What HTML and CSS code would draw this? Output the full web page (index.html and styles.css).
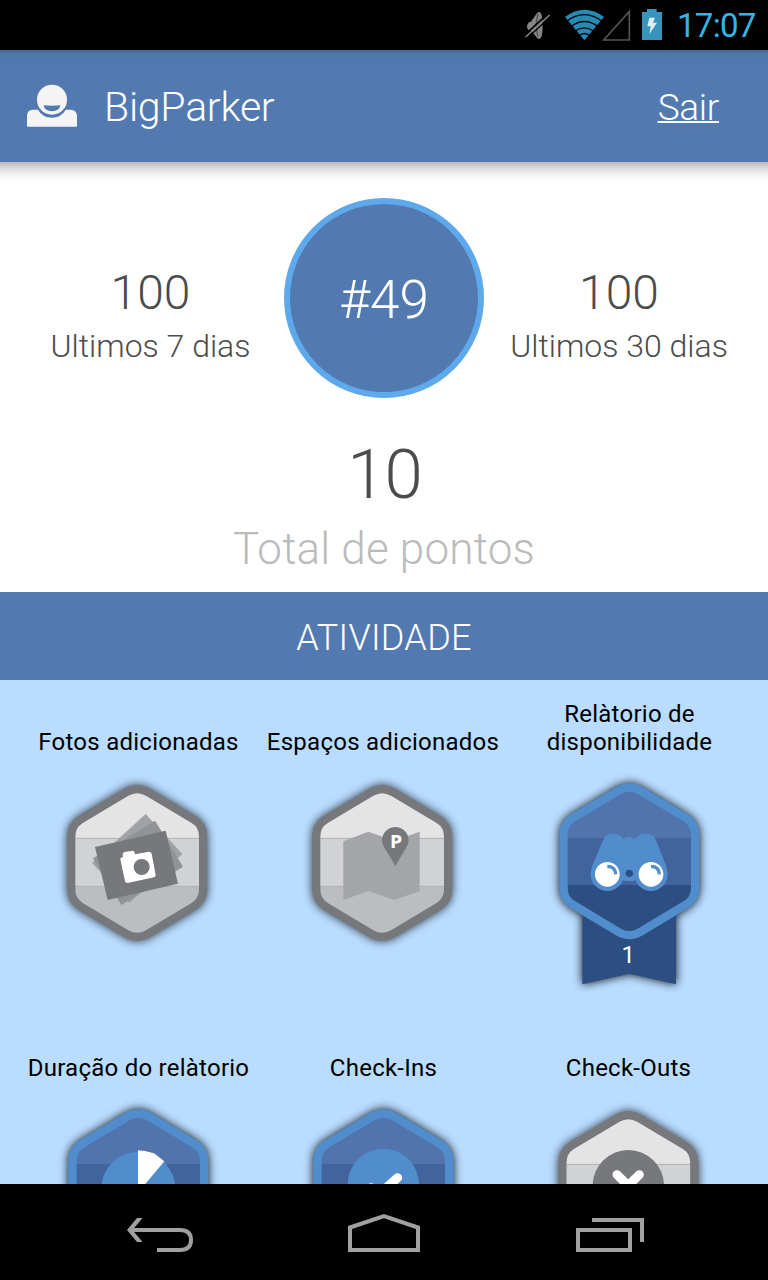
FILE: index.html
```html
<!DOCTYPE html>
<html lang="pt">
<head>
<meta charset="utf-8">
<title>BigParker</title>
<link rel="stylesheet" href="styles.css">
</head>
<body>
<svg class="defs" width="0" height="0" aria-hidden="true">
  <defs>
    <path id="hex" d="M64 200Q64 166 92 149L229 67Q261.500 48 294 67L431 149Q459 166 459 200V358Q459 392 431 409L294 491Q261.500 510 229 491L92 409Q64 392 64 358Z"/>
    <clipPath id="hexClip"><use href="#hex"/></clipPath>
    <g id="grayHex">
      <use href="#hex" class="gray-rim gray-shadow"/>
      <g clip-path="url(#hexClip)">
        <rect x="50" y="40" width="430" height="166" fill="#e4e4e4"/>
        <rect x="50" y="204" width="430" height="146" fill="#d1d2d4"/>
        <rect x="50" y="348" width="430" height="180" fill="#bcbdc1"/>
        <path d="M50 205H480M50 349H480" stroke="#b0b2b9" stroke-width="3"/>
      </g>
      <use href="#hex" class="gray-rim hollow"/>
    </g>
    <g id="blueHex">
      <g clip-path="url(#hexClip)">
        <rect x="50" y="40" width="430" height="170" fill="#5074ab"/>
        <rect x="50" y="209" width="430" height="142" fill="#40649b"/>
        <rect x="50" y="350" width="430" height="180" fill="#2c4e82"/>
      </g>
      <use href="#hex" class="blue-rim hollow"/>
    </g>
  </defs>
</svg>
<div class="screen">
  <div class="status">
    <svg class="status-icons" width="150" height="50" viewBox="0 0 450 150">
      <g transform="translate(-33 0)">
        <path d="M57 77L63 66H68L88 38Q104 26 104 77Q104 126 88 115L68 90H63Q57 88 57 77Z" fill="#858585"/>
        <path d="M90 42Q80 77 90 110" fill="none" stroke="#555" stroke-width="4"/>
        <path d="M49 106L121 40" stroke="#000" stroke-width="5"/>
        <path d="M53 111L125 45" stroke="#858585" stroke-width="5"/>
        <path d="M57 115L129 49" stroke="#000" stroke-width="4"/>
        <path d="M171 51Q229 8 288 51L229 121Z" fill="#258bb5"/>
        <path d="M174 65Q229 23 284 65M187 81Q229 48 272 81M200 94Q229 73 258 94M212 108Q229 93 246 108" fill="none" stroke="#000" stroke-width="4"/>
        <path d="M287 120L364 34V120Z" fill="none" stroke="#555" stroke-width="5"/>
        <path d="M402 36H417V27H446V36H462V120H402Z" fill="#3795bb"/>
        <path d="M424 53H441L435 68H447L424 102L428 79H418Z" fill="#dcecf4"/>
      </g>
    </svg>
    <span class="clock">17:07</span>
  </div>
  <header class="bar">
    <svg width="52" height="44" viewBox="0 0 156 132">
      <path d="M3 128V95Q3 78 20 77H36Q49 100 77 101Q107 100 119 77H134Q152 78 153 95V126Q153 128 150 128H6Q3 128 3 126Z" fill="#f4f4f4"/>
      <circle cx="78" cy="47" r="45" fill="#f4f4f4"/>
      <path d="M53 64Q78 66 103 64Q101 81 78 82Q55 81 53 64Z" fill="#527aaf"/>
    </svg>
    <span class="name">BigParker</span>
    <a class="logout">Sair</a>
  </header>
  <main class="summary">
    <div class="stats">
      <div class="stat stat-week"><b>100</b><span>Ultimos 7 dias</span></div>
      <div class="rank">#49</div>
      <div class="stat stat-month"><b>100</b><span>Ultimos 30 dias</span></div>
    </div>
    <div class="total">10</div>
    <div class="total-label">Total de pontos</div>
  </main>
  <h2 class="section"><span>ATIVIDADE</span></h2>
  <section class="badges">
    <div class="badge">
      <p>Fotos adicionadas</p>
      <svg width="180" height="230" viewBox="0 0 540 690">
        <use href="#grayHex"/>
        <path d="M287 132L397 252L238 399L126 279Z" fill="#a1a2a6"/>
        <path d="M315 152L399 290L214 405L129 265Z" fill="#929397"/>
        <path d="M135 231L347 182L384 341L173 390Z" fill="#77787c"/>
        <path d="M211 268Q210 263 219 261L218 252Q219 247 224 246L249 242Q254 243 255 253L297 245Q303 245 305 251L317 315Q317 320 312 322L233 339Q227 340 225 334Z" fill="#fff"/>
        <circle cx="275" cy="291" r="24" fill="#77787c"/>
      </svg>
    </div>
    <div class="badge">
      <p>Espaços adicionados</p>
      <svg width="180" height="230" viewBox="0 0 540 690">
        <use href="#grayHex"/>
        <path d="M145 214L220 185L298 212L374 185V363L298 390L220 363L145 390Z" fill="#a4a5a9"/>
        <path d="M301 288Q286 262 269 235Q261 222 261 211A40 40 0 0 1 341 211Q341 222 333 235Q316 262 301 288Z" fill="#77787c"/>
        <text class="pin-letter" x="303" y="233" text-anchor="middle">P</text>
      </svg>
    </div>
    <div class="badge">
      <p>Relàtorio de disponibilidade</p>
      <svg width="180" height="230" viewBox="0 0 540 690">
        <g class="hex-shadow">
          <path d="M127 400H408V643L268 611L127 643Z" fill="#2c4e82"/>
          <use href="#blueHex" x="6.500" y="-5"/>
        </g>
        <g fill="#518dcc">
          <path d="M188 213Q196 191 221 191Q239 192 250 206Q268 196 285 206Q298 191 316 191Q341 192 349 213L380 292L289 329Q268 339 246 329L155 292Z"/>
          <circle cx="202" cy="313" r="50"/>
          <circle cx="333" cy="313" r="50"/>
        </g>
        <circle cx="202" cy="313" r="37" fill="#fff"/>
        <circle cx="333" cy="313" r="37" fill="#fff"/>
        <path d="M202 289Q226 289 227 313M333 289Q357 289 358 313" fill="none" stroke="#518dcc" stroke-width="10"/>
        <circle cx="268" cy="310" r="11" fill="#2c4e82"/>
        <text class="count" x="265" y="579" text-anchor="middle">1</text>
      </svg>
    </div>
    <div class="badge">
      <p>Duração do relàtorio</p>
      <svg width="180" height="230" viewBox="0 0 540 690">
        <g class="hex-shadow"><use href="#blueHex" x="3.500" y="-5"/></g>
        <circle cx="265" cy="278" r="111" fill="#518dcc"/>
        <path d="M264 163L285 165L312 172L343 196L264 290Z" fill="#fff"/>
      </svg>
    </div>
    <div class="badge">
      <p>Check-Ins</p>
      <svg width="180" height="230" viewBox="0 0 540 690">
        <g class="hex-shadow"><use href="#blueHex" x="3.500" y="-5"/></g>
        <circle cx="265" cy="265" r="107" fill="#518dcc"/>
        <path d="M228 275L250 297L308 245" class="mark"/>
      </svg>
    </div>
    <div class="badge">
      <p>Check-Outs</p>
      <svg width="180" height="230" viewBox="0 0 540 690">
        <use href="#grayHex" x="3.500"/>
        <circle cx="265" cy="269" r="107" fill="#77787c"/>
        <path d="M231 236L298 302M298 236L231 302" class="mark"/>
      </svg>
    </div>
  </section>
  <nav class="nav">
    <svg width="768" height="96" viewBox="0 0 768 96" fill="none" stroke="#a0a0a0" stroke-width="4">
      <path d="M137 34H142.500L132.500 46L142.500 58H137L127 46Z" fill="#a0a0a0" stroke="none"/>
      <path d="M130 46H180Q191 46 191 56T180 66H157"/>
      <path d="M350 43.500L384 32L418 43.500V66H350Z"/>
      <path d="M578 46H630V66H578ZM592 36H642V58"/>
    </svg>
  </nav>
</div>
</body>
</html>
```
FILE: styles.css
```css
body { margin: 0; font-family: Roboto, sans-serif; }
.defs { position: absolute; }
.screen { width: 768px; height: 1280px; display: flex; flex-direction: column; overflow: hidden; background: #fff; }
.status { height: 50px; flex: none; background: #000; display: flex; align-items: center; padding-left: 519px; }
.status-icons { flex: none; }
.clock { margin-left: 8px; color: #33b5e5; font-size: 33px; line-height: 50px; letter-spacing: -0.7px; padding-top: 2px; }
.bar { height: 112px; flex: none; box-sizing: border-box; display: flex; align-items: center; padding: 0 49px 0 26px; color: #fff; font-weight: 300; background: linear-gradient(#3f628f 0, #5077aa 3px, #527ab0 18px); }
.name { font-size: 41px; margin-left: 26px; line-height: 48px; padding-top: 2px; letter-spacing: -0.25px; }
.logout { font-size: 37px; margin-left: auto; line-height: 48px; padding-top: 4px; letter-spacing: -0.3px; text-decoration: underline; text-decoration-thickness: 2px; }
.summary { height: 430px; flex: none; box-sizing: border-box; padding-top: 36px; text-align: center; font-weight: 300; color: #4c4c4c; background: linear-gradient(#bdb9ba 0, #ddd9da 6px, #f5f4f4 13px, #fff 20px); }
.stats { display: grid; grid-template-columns: 284px 200px 284px; }
.stat { display: flex; flex-direction: column; padding-top: 65px; }
.stat-week { padding-left: 17px; }
.stat-month { padding-right: 14px; }
.stat b { font-weight: 300; font-size: 48px; line-height: 60px; }
.stat span { font-size: 32px; line-height: 47px; }
.rank { height: 200px; box-sizing: border-box; border: 6px solid #5ea8ec; border-radius: 50%; background: #527ab0; color: #fff; font-size: 53px; line-height: 193px; }
.total { margin-top: 37px; font-size: 69px; line-height: 80px; letter-spacing: -1px; padding-left: 1px; }
.total-label { margin-top: 7px; font-size: 44px; line-height: 54px; letter-spacing: 0.2px; color: #bbb; }
.section { margin: 0; height: 88px; flex: none; background: #527ab0; color: #fff; text-align: center; font-weight: 300; font-size: 36px; line-height: 92px; letter-spacing: 0.3px; }
.badges { height: 504px; flex: none; box-sizing: border-box; overflow: hidden; background: #b9dcff; padding: 20px 0 0 17px; display: grid; grid-template-columns: repeat(3, 245px); grid-auto-rows: 326px; }
.badge p { margin: 0 0 14px; height: 56px; display: flex; align-items: flex-end; justify-content: center; text-align: center; font-size: 24px; line-height: 28px; letter-spacing: 0.25px; color: #000; white-space: nowrap; padding-right: 2px; }
.badge:nth-child(3) p { white-space: normal; padding: 0 20px; }
.badge:nth-child(2) p { padding-right: 3px; }
.badge svg { display: block; margin-left: 33px; overflow: visible; }
.gray-rim { stroke: #77787c; stroke-width: 24; }
.blue-rim { stroke: #518dcc; stroke-width: 25; }
.hollow { fill: none; }
.hex-shadow { filter: drop-shadow(0 0 14px rgba(0, 0, 0, .95)); }
.gray-shadow { filter: drop-shadow(0 0 14px rgba(0, 0, 0, .8)); }
.pin-letter { font: 700 53px "DejaVu Sans Condensed", "DejaVu Sans", sans-serif; font-stretch: condensed; fill: #fff; }
.count { font: 400 72px Roboto, sans-serif; fill: #fff; }
.mark { fill: none; stroke: #fff; stroke-width: 27; stroke-linecap: round; stroke-linejoin: round; }
.nav { height: 96px; flex: none; background: #000; }
.nav svg { display: block; }
```
